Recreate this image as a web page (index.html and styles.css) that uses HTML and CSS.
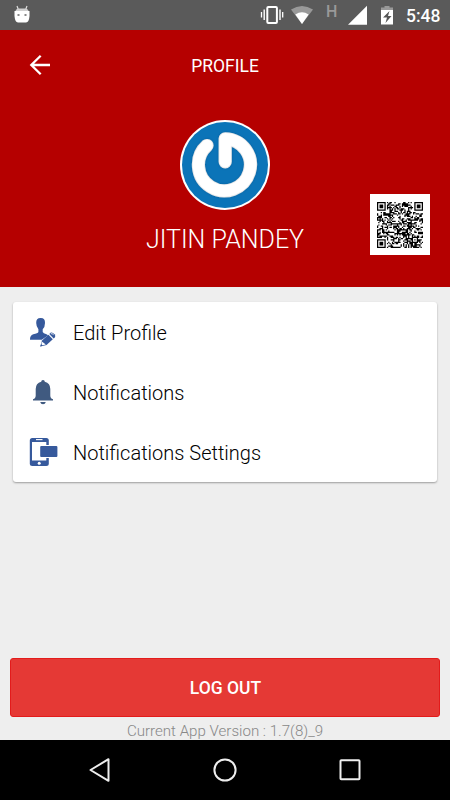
FILE: index.html
```html
<!DOCTYPE html>
<html lang="en">
<head>
    <meta charset="UTF-8">
    <meta name="viewport" content="width=device-width, initial-scale=1.0">
    <title>Profile</title>
    <link rel="stylesheet" href="styles.css">
</head>
<body>
    <div class="status-bar">
        <svg class="debug-icon" width="16" height="18" viewBox="0 0 16 18">
            <path d="M3 1L4.5 5M13 1L11.5 5" stroke="#ddd" stroke-width="1.2"/>
            <path d="M1.5 6Q2 3.5 5 3.5H11Q14 3.5 14.5 6Z" fill="#d0d0d0"/>
            <path d="M.5 6H15.5V11Q15 17.5 12 17.5H4Q1 17.5 .5 11Z" fill="#fff"/>
            <path d="M3.5 9h2v2h-2zM10.5 9h2v2h-2z" fill="#888"/>
        </svg>
        <svg class="status-icons" width="140" height="30" viewBox="0 0 140 30">
            <rect x="7.3" y="7" width="9.6" height="16" rx="1" fill="none" stroke="#fff" stroke-width="2"/>
            <path d="M4.2 9.5v10.5M20 9.5v10.5" stroke="#fff" stroke-width="1.4"/>
            <path d="M1.5 12v5.5M22.7 12v5.5" stroke="#fff" stroke-width="1.3"/>
            <path d="M31 9.5Q42 2.5 53 9.5L42 24Z" fill="#999"/>
            <path d="M35.3 14.5Q42 10 48.6 14.5L42 24Z" fill="#fff"/>
            <path d="M107 24.7V5.7L88 24.7Z" fill="#fff"/>
            <path d="M121 10V7.5h3.5V6h5v1.5h3.5V10Z" fill="#999"/>
            <path d="M121 10h12v14.5h-12Z" fill="#fff"/>
            <path d="M129.5 11l-6.5 6.5h4l-1.5 5.5 6-7h-3.5z" fill="#555"/>
        </svg>
        <span class="roaming">H</span>
        <span class="clock">5:48</span>
    </div>

    <div class="header">
        <div class="toolbar">
            <svg class="back" width="22" height="22" viewBox="0 0 22 22" fill="none" stroke="#fff" stroke-width="2.3">
                <path d="M21 11H2.5M11.7 1.7L2.3 11l9.4 9.3"/>
            </svg>
            <div class="title">PROFILE</div>
        </div>
        <svg class="avatar" width="90" height="90" viewBox="0 0 90 90">
            <defs>
                <filter id="bevel" x="-20%" y="-20%" width="140%" height="140%">
                    <feDropShadow dx="0" dy="0" stdDeviation=".8" flood-color="#04416b" flood-opacity=".4"/>
                </filter>
            </defs>
            <circle cx="45" cy="45" r="45" fill="#fff"/>
            <circle cx="45" cy="45" r="43" fill="#0b74b8"/>
            <g fill="none" stroke-width="13.2" stroke-linecap="round" stroke-linejoin="round">
                <path d="M27 25.5A26 26 0 1 0 45.2 18.8V41.8" stroke="#e9eaeb" filter="url(#bevel)"/>
                <path d="M27 25.5A26 26 0 1 0 45.2 18.8V41.8" stroke="#fff" stroke-width="11.4"/>
            </g>
        </svg>
        <div class="name">JITIN PANDEY</div>
        <div class="qr">
            <svg id="qr-code" width="46" height="46" viewBox="0 0 37 37"></svg>
        </div>
    </div>

    <div class="content">
        <div class="card">
            <div class="row">
                <svg class="row-icon" width="30" height="30" viewBox="0 0 30 30" fill="#36599c">
                    <path d="M8.2 6Q8 .9 12.7 1Q17.2.9 17 6Q17 10 14.7 12.2V15Q15.2 16.3 18.5 17.2L20.2 18.3L13.8 22.8H2Q1.8 18.2 5.3 17.2Q9.8 16.5 10.4 15V12.2Q8.2 9.5 8.2 6Z"/>
                    <path d="M14 23.5L20.4 17.8L24.8 22.3L18.5 28L12.3 29.4Z"/>
                    <path d="M13.8 24.4L17.8 27.4L13.4 28.4Z" fill="#fff"/>
                    <path d="M13.1 27L14.7 28.7L12.3 29.4Z"/>
                    <path d="M21.3 17L22.5 15.8Q24 14.6 26.5 17.2Q28 19.2 26.8 20.5L25.7 21.5Z"/>
                    <path d="M22.8 16.8q1-.8 2.8.9" fill="none" stroke="#fff" stroke-width=".8"/>
                </svg>
                <span class="label">Edit Profile</span>
            </div>
            <div class="row">
                <svg class="row-icon" width="30" height="30" viewBox="0 0 30 30" fill="#405a80">
                    <path d="M13.2 4.8Q13.2 3 15 3Q16.8 3 16.8 4.8Q22.3 6.4 22.3 12V18.5Q22.3 21.5 25 22.3V23.5H5V22.3Q7.7 21.5 7.7 18.5V12Q7.7 6.4 13.2 4.8Z"/>
                    <path d="M12.2 25H17.8Q17.3 27.3 15 27.3Q12.7 27.3 12.2 25Z"/>
                </svg>
                <span class="label">Notifications</span>
            </div>
            <div class="row">
                <svg class="row-icon" width="30" height="30" viewBox="0 0 30 30">
                    <rect x="1.8" y="1" width="19" height="28" rx="2.5" fill="#36599c"/>
                    <path d="M4 5h14.3v18.5H4Z" fill="#fff"/>
                    <path d="M8 2.6h6.5" stroke="#fff" stroke-width="1.1"/>
                    <circle cx="11.2" cy="26.3" r="1.5" fill="#fff"/>
                    <path d="M11 8h11v13H11Z" fill="#fff"/>
                    <rect x="12.2" y="9" width="17.2" height="11" rx="1" fill="#36599c"/>
                </svg>
                <span class="label">Notifications Settings</span>
            </div>
        </div>

        <div class="footer">
            <button class="logout">LOG OUT</button>
            <div class="version">Current App Version : 1.7(8)_9</div>
        </div>
    </div>

    <div class="nav-bar">
        <svg width="24" height="26" viewBox="0 0 24 26"><path d="M20.5 2.2V23.8L2.5 13Z"/></svg>
        <svg width="24" height="26" viewBox="0 0 24 26"><circle cx="12" cy="13" r="10.6"/></svg>
        <svg width="24" height="26" viewBox="0 0 24 26"><rect x="2.5" y="3.3" width="19" height="19" rx=".8"/></svg>
    </div>

    <script src="qr.js"></script>
</body>
</html>
```
FILE: styles.css
```css
* {
    box-sizing: border-box;
}

body {
    margin: 0;
    width: 450px;
    height: 800px;
    display: flex;
    flex-direction: column;
    background-color: #eee;
    font-family: Roboto, "Liberation Sans", sans-serif;
    overflow: hidden;
}

svg {
    display: block;
    flex: none;
}

.status-bar {
    position: relative;
    height: 30px;
    flex: none;
    display: flex;
    align-items: center;
    padding: 0 10px 0 14px;
    background-color: #5a5a5a;
}

.status-icons {
    margin-left: auto;
}

.debug-icon {
    margin-top: -3px;
}

.roaming {
    position: absolute;
    left: 326px;
    top: 2px;
    font-size: 16px;
    line-height: 19px;
    font-weight: 500;
    color: #999;
}

.clock {
    width: 34px;
    margin-left: 6px;
    padding-top: 1px;
    font-size: 17.5px;
    font-weight: 500;
    color: #fff;
    white-space: nowrap;
}

.header {
    position: relative;
    height: 257px;
    flex: none;
    display: flex;
    flex-direction: column;
    align-items: center;
    background-color: #b50000;
    color: #fff;
}

.toolbar {
    width: 100%;
    height: 70px;
    display: grid;
    grid-template-columns: 80px 1fr 80px;
    align-items: center;
}

.back {
    margin-left: 29px;
}

.title {
    padding-top: 2px;
    font-size: 17.5px;
    text-align: center;
}

.avatar {
    margin-top: 20px;
}

.name {
    margin-top: 14px;
    font-size: 25px;
    line-height: 32px;
    font-weight: 300;
}

.qr {
    position: absolute;
    right: 20px;
    bottom: 32px;
    width: 60px;
    height: 61px;
    display: flex;
    align-items: center;
    justify-content: center;
    background-color: #fff;
}

.content {
    flex: 1;
    display: flex;
    flex-direction: column;
    justify-content: space-between;
    padding: 15px 10px 0;
}

.card {
    margin: 0 3px;
    background-color: #fff;
    border-radius: 3px;
    box-shadow: 0 1px 2px rgba(0, 0, 0, 0.35);
}

.row {
    height: 60px;
    display: flex;
    align-items: center;
    gap: 15px;
    padding-left: 15px;
    font-size: 20px;
    font-weight: 300;
    color: #000;
}

.label {
    padding-top: 2px;
}

.logout {
    display: block;
    width: 100%;
    height: 59px;
    padding: 1px 0 0 1px;
    border: 1px solid #e31b1b;
    border-radius: 3px;
    background-color: #e53935;
    color: #fff;
    font-family: inherit;
    font-size: 17.5px;
    font-weight: 500;
}

.version {
    height: 23px;
    padding-top: 5px;
    font-size: 15.1px;
    line-height: 18px;
    font-weight: 300;
    text-align: center;
    color: #888;
}

.nav-bar {
    height: 60px;
    flex: none;
    display: flex;
    align-items: center;
    justify-content: center;
    gap: 101px;
    background-color: #000;
    fill: none;
    stroke: #eee;
    stroke-width: 2;
    stroke-linejoin: round;
}
```
FILE: qr.js
```js
const size = 37;
const svg = document.getElementById('qr-code');
let seed = 7;
let path = '';

function random() {
    seed = (seed * 16807) % 2147483647;
    return seed / 2147483647;
}

// square rings of the finder and alignment marks
function mark(x, y, cx, cy, radius) {
    const d = Math.max(Math.abs(x - cx), Math.abs(y - cy));
    if (d > radius + 1) return null;
    if (radius === 2 && d > 2) return null;
    return radius === 3 ? d !== 2 && d !== 4 : d !== 1;
}

for (let y = 0; y < size; y++) {
    for (let x = 0; x < size; x++) {
        let dark = mark(x, y, 3, 3, 3);
        if (dark === null) dark = mark(x, y, 33, 3, 3);
        if (dark === null) dark = mark(x, y, 3, 33, 3);
        if (dark === null) dark = mark(x, y, 30, 30, 2);
        if (dark === null) dark = random() < 0.52;
        if (dark) path += `M${x} ${y}h1v1h-1z`;
    }
}

svg.innerHTML = `<path d="${path}" fill="#000"/>`;
```
